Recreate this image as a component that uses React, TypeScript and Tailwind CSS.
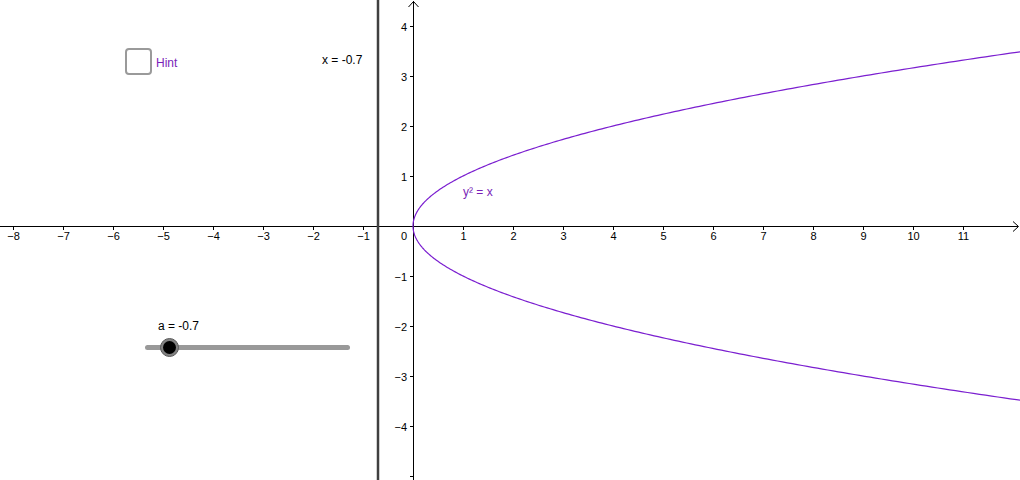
import React from 'react';

const OX = 413;
const OY = 226;
const U = 50;

const font = '"Liberation Sans", Arial, sans-serif';
const curve = '#7b1fd0';

const xTicks = [-8, -7, -6, -5, -4, -3, -2, -1, 1, 2, 3, 4, 5, 6, 7, 8, 9, 10, 11];
const yTicks = [4, 3, 2, 1, -1, -2, -3, -4, -5];

const minus = (n: number) => (n < 0 ? '\u2212' + Math.abs(n) : String(n));

function parabola() {
  const pts: string[] = [];
  for (let i = 0; i <= 400; i++) {
    const y = -3.6 + (7.2 * i) / 400;
    const px = OX + U * y * y;
    const py = OY - U * y;
    pts.push(`${px.toFixed(2)},${py.toFixed(2)}`);
  }
  return 'M' + pts.join(' L');
}

const Graph: React.FC = () => (
  <svg width={1020} height={480} className="block">
    {/* axes */}
    <line x1={0} y1={OY + 0.5} x2={1018} y2={OY + 0.5} stroke="#000" strokeWidth={1} />
    <path d={`M1013,${OY - 4.5} L1018.5,${OY + 0.5} L1013,${OY + 5.5}`} fill="none" stroke="#000" strokeWidth={1} />
    <line x1={OX + 0.5} y1={1} x2={OX + 0.5} y2={480} stroke="#000" strokeWidth={1} />
    <path d={`M${OX - 4.5},7 L${OX + 0.5},1.5 L${OX + 5.5},7`} fill="none" stroke="#000" strokeWidth={1} />

    {xTicks.map((n) => {
      const x = OX + n * U + 0.5;
      return (
        <g key={'x' + n}>
          <line x1={x} y1={OY} x2={x} y2={OY + 4} stroke="#000" />
          <text x={x} y={OY + 14} fontSize={11} fontFamily={font} textAnchor="middle" fill="#000">
            {minus(n)}
          </text>
        </g>
      );
    })}
    <text x={OX - 6} y={OY + 14} fontSize={11} fontFamily={font} textAnchor="end" fill="#000">
      0
    </text>

    {yTicks.map((n) => {
      const y = OY - n * U + 0.5;
      return (
        <g key={'y' + n}>
          <line x1={OX - 3} y1={y} x2={OX} y2={y} stroke="#000" />
          {n > -5 && (
            <text x={OX - 6} y={y + 4} fontSize={11} fontFamily={font} textAnchor="end" fill="#000">
              {minus(n)}
            </text>
          )}
        </g>
      );
    })}

    {/* line x = -0.7 */}
    <line x1={378} y1={0} x2={378} y2={480} stroke="#404040" strokeWidth={2.5} />

    {/* y^2 = x */}
    <path d={parabola()} fill="none" stroke={curve} strokeWidth={1.2} />
    <text x={463} y={196} fontSize={12} fontFamily={font} fill="#7a1fb8">
      y² = x
    </text>
  </svg>
);

const Checkbox: React.FC<{ label: string }> = ({ label }) => (
  <div className="flex items-center gap-[4px]">
    <div className="w-[27px] h-[27px] rounded-[4px] border-2 border-[#9a9a9a] bg-white" />
    <span className="text-[12px] text-[#7a1fb8] leading-none mt-[2px]">{label}</span>
  </div>
);

const Slider: React.FC<{ label: string }> = ({ label }) => (
  <div className="flex flex-col gap-[13px]">
    <span className="text-[12px] text-black leading-none pl-[13px]">{label}</span>
    <div className="relative w-[205px] h-[5px] rounded-full bg-[#999999]">
      <div className="absolute left-[15px] top-[-7px] w-[19px] h-[19px] rounded-full bg-[#828282] border border-[#5a5a5a] flex items-center justify-center">
        <div className="w-[13px] h-[13px] rounded-full bg-black" />
      </div>
    </div>
  </div>
);

export default function App() {
  return (
    <div className="relative w-[1020px] h-[480px] bg-white overflow-hidden" style={{ fontFamily: font }}>
      <Graph />

      <div className="absolute left-[125px] top-[48px]">
        <Checkbox label="Hint" />
      </div>

      <div className="absolute left-[322px] top-[54px] text-[12px] text-black leading-none">x = -0.7</div>

      <div className="absolute left-[145px] top-[320px]">
        <Slider label="a = -0.7" />
      </div>
    </div>
  );
}
